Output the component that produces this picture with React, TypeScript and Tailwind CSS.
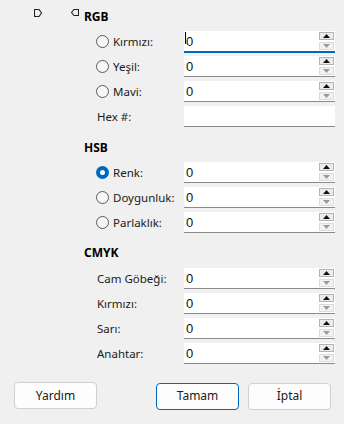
import React from "react";

const UI = { fontFamily: '"Noto Sans", "Segoe UI", sans-serif' };
const NUM = { fontFamily: '"Liberation Sans", Arial, sans-serif' };

function Radio({ checked }: { checked?: boolean }) {
  if (checked) {
    return (
      <span className="w-[13px] h-[13px] rounded-full bg-[#0067c0] flex items-center justify-center shrink-0">
        <span className="w-[5px] h-[5px] rounded-full bg-white" />
      </span>
    );
  }
  return <span className="w-[13px] h-[13px] rounded-full border border-[#5a5a5a] bg-[#f7f7f7] shrink-0" />;
}

function Spin() {
  return (
    <div className="absolute right-[1px] top-[1px] flex flex-col gap-[2px]">
      <div className="w-[15px] h-[8px] border border-[#b4b4b4] bg-[#ececec] flex items-center justify-center">
        <svg width="7" height="4" viewBox="0 0 7 4"><path d="M0 4 L3.5 0 L7 4 Z" fill="#111" /></svg>
      </div>
      <div className="w-[15px] h-[8px] border border-[#dcdcdc] bg-[#f2f2f2] flex items-center justify-center">
        <svg width="7" height="4" viewBox="0 0 7 4"><path d="M0 0 L7 0 L3.5 4 Z" fill="#9a9a9a" /></svg>
      </div>
    </div>
  );
}

type RowProps = {
  label: string;
  radio?: boolean;
  checked?: boolean;
  value?: string;
  focused?: boolean;
  spin?: boolean;
};

function Row({ label, radio, checked, value = "0", focused, spin = true }: RowProps) {
  return (
    <div className="flex items-center h-[21px]">
      <div className={`w-[184px] flex items-center gap-[4px] ${radio ? "pl-[96px]" : "pl-[97px]"}`}>
        {radio && <Radio checked={checked} />}
        <span className="text-[11.5px] text-[#1a1a1a] leading-none">{label}</span>
      </div>
      <div
        className={`relative w-[151px] h-[21px] bg-white border-b ${
          focused ? "border-[#0067c0] shadow-[0_1px_0_#0067c0]" : "border-[#8a8a8a]"
        }`}
      >
        <span className="absolute left-[2px] top-[3px] text-[13px] leading-[15px] text-[#111]" style={NUM}>
          {value}
        </span>
        {focused && <span className="absolute left-[1px] top-[1px] w-[1px] h-[12px] bg-black" />}
        {spin && <Spin />}
      </div>
    </div>
  );
}

function Header({ title, icons }: { title: string; icons?: boolean }) {
  return (
    <div className="flex items-start h-[16px]">
      {icons ? (
        <div className="w-[84px] flex pl-[34px] gap-[28px]">
          <svg width="9" height="8" viewBox="0 0 9 8">
            <path d="M0.5 0.5 H5 L7.5 4 L5 7.5 H0.5 Z" fill="none" stroke="#222" strokeWidth="1.1" />
          </svg>
          <svg width="8" height="8" viewBox="0 0 8 8">
            <path d="M7.5 0.5 H3 L0.5 3.5 L3 6.5 H7.5 Z" fill="none" stroke="#222" strokeWidth="1.1" />
          </svg>
        </div>
      ) : (
        <div className="w-[84px]" />
      )}
      <span className="text-[12px] font-bold text-black leading-[16px]">{title}</span>
    </div>
  );
}

function Btn({ label, primary }: { label: string; primary?: boolean }) {
  return (
    <button
      className={`w-[83px] h-[27px] rounded-[4px] bg-[#fdfdfd] text-[12px] text-[#1a1a1a] ${
        primary ? "border border-[#0067c0]" : "border border-[#d0d0d0]"
      }`}
    >
      {label}
    </button>
  );
}

export default function App() {
  return (
    <div className="w-[344px] h-[424px] bg-[#f0f0f0] pt-[9px] flex flex-col" style={UI}>
      <Header title="RGB" icons />
      <div className="mt-[6px] flex flex-col gap-[4px]">
        <Row label="Kırmızı:" radio value="0" focused />
        <Row label="Yeşil:" radio />
        <Row label="Mavi:" radio />
        <Row label="Hex #:" value="" spin={false} />
      </div>

      <div className="mt-[13px]">
        <Header title="HSB" />
      </div>
      <div className="mt-[6px] flex flex-col gap-[4px]">
        <Row label="Renk:" radio checked />
        <Row label="Doygunluk:" radio />
        <Row label="Parlaklık:" radio />
      </div>

      <div className="mt-[12px]">
        <Header title="CMYK" />
      </div>
      <div className="mt-[7px] flex flex-col gap-[4px]">
        <Row label="Cam Göbeği:" />
        <Row label="Kırmızı:" />
        <Row label="Sarı:" />
        <Row label="Anahtar:" />
      </div>

      <div className="mt-[18px] flex pl-[14px]">
        <Btn label="Yardım" />
        <div className="ml-[59px]">
          <Btn label="Tamam" primary />
        </div>
        <div className="ml-[9px]">
          <Btn label="İptal" />
        </div>
      </div>
    </div>
  );
}
